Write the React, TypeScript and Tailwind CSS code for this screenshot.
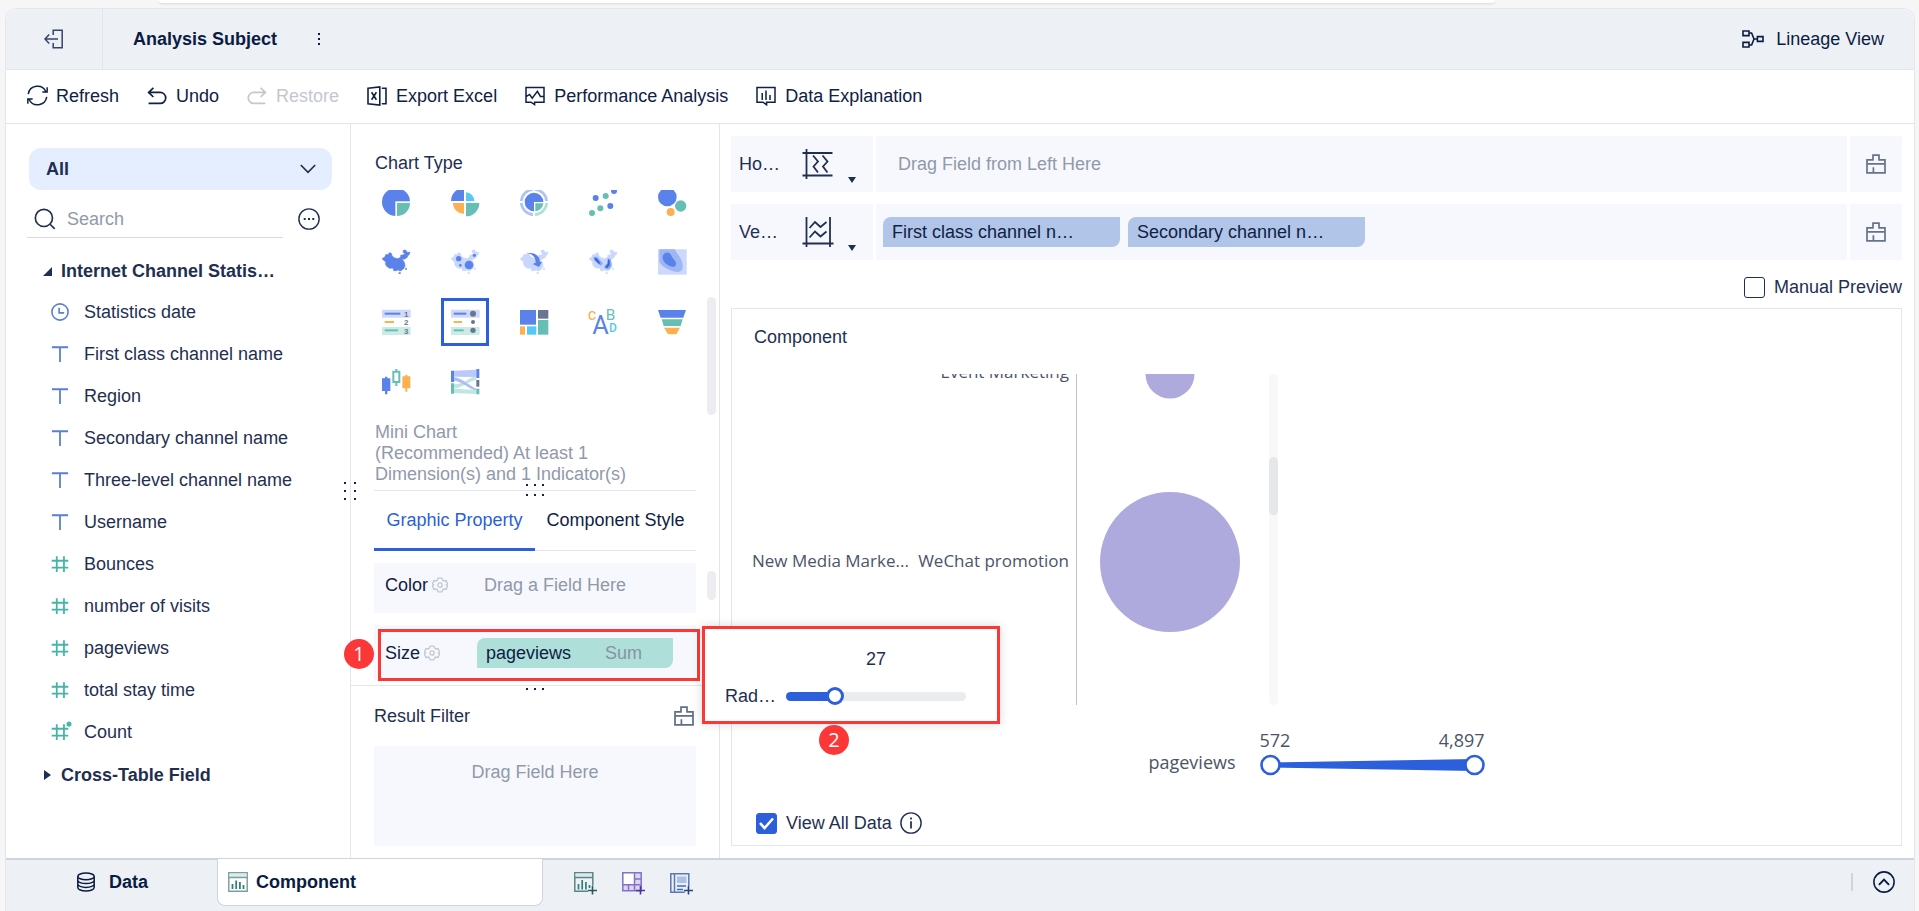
import { ReactNode, useState } from "react";
import clsx from "clsx";

type IconProps = { className?: string };
type FieldType = "date" | "text" | "number" | "count";
type Field = { name: string; type: FieldType };

const fields: Field[] = [
  { name: "Statistics date", type: "date" },
  { name: "First class channel name", type: "text" },
  { name: "Region", type: "text" },
  { name: "Secondary channel name", type: "text" },
  { name: "Three-level channel name", type: "text" },
  { name: "Username", type: "text" },
  { name: "Bounces", type: "number" },
  { name: "number of visits", type: "number" },
  { name: "pageviews", type: "number" },
  { name: "total stay time", type: "number" },
  { name: "Count", type: "count" },
];

const BLUE = "#5a82ea";
const GREEN = "#66beb5";
const ORANGE = "#fcb050";
const CYAN = "#55c8f5";
const GRAY = "#69768f";
const LIGHT = "#c9d7fd";

/* ---------- line icons ---------- */

const Line = ({
  children,
  className = "w-5 h-5",
  width = 1.5,
}: {
  children: ReactNode;
  className?: string;
  width?: number;
}) => (
  <svg
    viewBox="0 0 20 20"
    className={clsx("shrink-0", className)}
    fill="none"
    stroke="currentColor"
    strokeWidth={width}
    aria-hidden="true"
  >
    {children}
  </svg>
);

const ExitIcon = () => (
  <Line>
    <path d="M9.2 6V1.2h9v17.6h-9V14M14 10H1.2M5.2 5.4 1 10l4.2 4.4" />
  </Line>
);

const RefreshIcon = () => (
  <Line className="w-[21px] h-[21px]" width={1.4}>
    <path d="M1.2 8.6A8.9 8.9 0 0 1 18 6.2M18.8 11.4A8.9 8.9 0 0 1 2 13.8M19.2 2.2v4.4h-4.6M.8 17.8v-4.4h4.6" />
  </Line>
);

const UndoIcon = () => (
  <Line width={1.7}>
    <path d="M6.4 1.8 1.6 6.4 6.4 11M1.8 6.4h11.4a5.3 5.3 0 0 1 0 11H1.6" />
  </Line>
);

const RestoreIcon = () => (
  <Line width={1.7}>
    <path d="m13.6 1.8 4.8 4.6-4.8 4.6M18.2 6.4H6.8a5.3 5.3 0 0 0 0 11h11.6" />
  </Line>
);

const ExcelIcon = () => (
  <Line width={1.6}>
    <path d="M1 2.2 12.8 1v18L1 17.8zM14.8 2.2H19v15.6h-4.2" />
    <path d="m4.6 6.2 4.8 7.6M9.4 6.2l-4.8 7.6" />
  </Line>
);

const PerformanceIcon = () => (
  <Line>
    <path d="M1 1.4h18v14.8h-9.4v2.4l-3.6-2.4H1zM1.4 10.4l3.2-2 2.6 3.8 5.2-6.8 3 5h3.4" />
  </Line>
);

const ExplanationIcon = () => (
  <Line>
    <path d="M1 1.4h18v14.8h-8.4v2.6L7 16.2H1zM6.2 7v7M10 4.4V14M14 9v5" />
  </Line>
);

const LineageIcon = () => (
  <svg viewBox="0 0 22 18" className="w-[22px] h-[18px]" fill="none" stroke="currentColor" strokeWidth="1.6" aria-hidden="true">
    <path d="M1 1h6v4.6H1zM1 12.4h6V17H1zM15.4 6.6H21v4.8h-5.6zM7 3h2.6l2.4 6-2.4 6H7M12 9h3.4" />
  </svg>
);

const SearchIcon = () => (
  <Line className="w-[22px] h-[22px]">
    <circle cx="9" cy="9" r="7.8" />
    <path d="m14.6 14.8 4.2 4.2" />
  </Line>
);

const MoreIcon = () => (
  <Line className="w-[22px] h-[22px]" width={1.3}>
    <circle cx="10" cy="10" r="9.2" />
    <path d="M5.2 10h1.8M9.1 10h1.8M13 10h1.8" strokeWidth="1.8" />
  </Line>
);

const ChevronIcon = ({ className }: IconProps) => (
  <svg viewBox="0 0 16 10" className={className} fill="none" stroke="currentColor" strokeWidth="1.7" aria-hidden="true">
    <path d="m.8 1 7.2 7.4L15.2 1" />
  </svg>
);

const BrushIcon = () => (
  <Line width={1.7}>
    <path d="M1 5.8h6V1.2h6v4.6h6v13H1zM1 9.8h18M7.4 13.2v5.4" />
  </Line>
);

const GearIcon = () => (
  <Line className="w-4 h-4 text-[#c4c8d2]" width={1.7}>
    <path d="M7.6 1.4h4.8l1 2.6 1.6.9 2.6-.4 1.9 4.2-1.6 1.3 1.6 1.3-1.9 4.2-2.6-.4-1.6.9-1 2.6H7.6L6.6 16 5 15.1l-2.6.4L.5 11.3 2.1 10 .5 8.7l1.9-4.2 2.6.4L6.6 4z" />
    <circle cx="10" cy="10" r="2.7" />
  </Line>
);

const InfoIcon = () => (
  <Line className="w-[22px] h-[22px]" width={1.3}>
    <circle cx="10" cy="10" r="9.2" />
    <path d="M10 8.4V15M10 5v1.8" strokeWidth="1.6" />
  </Line>
);

const UpCircleIcon = () => (
  <Line className="w-[22px] h-[22px]" width={1.4}>
    <circle cx="10" cy="10" r="9.2" />
    <path d="m5.4 12.6 4.6-4.8 4.6 4.8" strokeWidth="1.8" />
  </Line>
);

const DatabaseIcon = () => (
  <Line>
    <ellipse cx="10" cy="4.4" rx="8.2" ry="3.4" />
    <path d="M1.8 4.4v11.2c0 1.9 3.7 3.4 8.2 3.4s8.2-1.5 8.2-3.4V4.4M1.8 8.2c0 1.9 3.7 3.4 8.2 3.4s8.2-1.5 8.2-3.4M1.8 12c0 1.9 3.7 3.4 8.2 3.4s8.2-1.5 8.2-3.4" />
  </Line>
);

const HorizontalAxisIcon = () => (
  <svg viewBox="0 0 32 32" className="w-8 h-8" fill="none" stroke="currentColor" strokeWidth="1.8" aria-hidden="true">
    <path d="M4.5 1v30M.5 5h30M.5 27.5h30M11 7.5l5 6-4.5 5 4.5 6M20.5 7.5l5 6-4.5 5 4.5 6" />
  </svg>
);

const VerticalAxisIcon = () => (
  <svg viewBox="0 0 32 32" className="w-8 h-8" fill="none" stroke="currentColor" strokeWidth="1.8" aria-hidden="true">
    <path d="M4.5 1v30M28 1v30M.5 27.5h31M7.5 12l5.5-6 5.5 5 6-5M7.5 21.5l5.5-6 5.5 5 6-5" />
  </svg>
);

const FieldIcon = ({ type }: { type: FieldType }) => {
  if (type === "date") {
    return (
      <Line className="w-[18px] h-[18px] text-[#5b80cf]" width={1.8}>
        <circle cx="10" cy="10" r="9" />
        <path d="M9 5.4V11h5.6" />
      </Line>
    );
  }
  if (type === "text") {
    return (
      <Line className="w-[18px] h-[18px] text-[#5b80cf]" width={2}>
        <path d="M1 2.5h18M10 2.5V19" />
      </Line>
    );
  }
  return (
    <Line className="w-[18px] h-[18px] text-[#45b5a8] overflow-visible" width={2}>
      <path d="M6.4 1.5V19M14.4 1.5V19M.8 6.4h18.4M.8 14h18.4" />
      {type === "count" && (
        <path d="M20-1.8v6M17.4-.3l5.2 3M22.6-.3l-5.2 3" strokeWidth="1.9" />
      )}
    </Line>
  );
};

/* ---------- chart type icons ---------- */

const chinaPath =
  "M0 32l8-4 4-9 6 2 4-7 6 2 2 8 8 6 10 2 8-4 0-6 10-2 2-4-5-3 1-6 7-1 4 7 9 0-3 8-4 1-1 6-8 5-8 1 4 4 4 8 1 8-4 8-8 6-5 1-3-4-6 3-8 0-2-8-10 1-9-6-4-8 2-4z";

const China = ({ fill }: { fill: string }) => (
  <>
    <path d={chinaPath} fill={fill} stroke={fill} strokeWidth="2" />
    <path d="M70 59h4v7h-4zM50 73h6v5h-6z" fill={fill} />
  </>
);

const chartTypes: { label: string; art: ReactNode }[] = [
  {
    label: "Pie",
    art: (
      <>
        <circle cx="42" cy="42" r="42" fill={BLUE} />
        <path d="M40 40h46v46H40z" fill="#fff" />
        <path d="M45 45h39a39 39 0 0 1-39 39z" fill={GREEN} />
      </>
    ),
  },
  {
    label: "Rose",
    art: (
      <>
        <path d="M39 39H0A39 39 0 0 1 39 0z" fill={BLUE} />
        <path d="M45 39V13a26 26 0 0 1 25 26z" fill={CYAN} />
        <path d="M39 45v32A32 32 0 0 1 6 45z" fill={ORANGE} />
        <path d="M45 45h40a40 40 0 0 1-40 40z" fill={GREEN} />
      </>
    ),
  },
  {
    label: "Multilayer pie",
    art: (
      <>
        <path d="M39 84A42 42 0 0 1 0 45h8a34 34 0 0 0 31 31zM0 39A42 42 0 0 1 39 0v8A34 34 0 0 0 8 39zM45 0a42 42 0 0 1 39 39h-8A34 34 0 0 0 45 8z" fill="#afc3f7" />
        <path d="M84 45a42 42 0 0 1-39 39v-8a34 34 0 0 0 31-31z" fill="#b2dfda" />
        <path d="M42 42V70A28 28 0 1 1 70 42z" fill={BLUE} />
        <path d="M46 46h24a26 26 0 0 1-24 24z" fill={GREEN} />
      </>
    ),
  },
  {
    label: "Scatter",
    art: (
      <>
        <g fill={BLUE}>
          <circle cx="20" cy="30" r="9" />
          <circle cx="75" cy="9" r="9" />
          <circle cx="64" cy="54" r="9" />
        </g>
        <g fill={GREEN}>
          <circle cx="50" cy="24" r="9" />
          <circle cx="34" cy="61" r="9" />
          <circle cx="9" cy="75" r="9" />
        </g>
      </>
    ),
  },
  {
    label: "Bubble",
    art: (
      <>
        <circle cx="28" cy="27" r="28" fill={BLUE} />
        <circle cx="68" cy="54" r="17" fill={GREEN} />
        <circle cx="38" cy="72" r="12" fill={ORANGE} />
      </>
    ),
  },
  { label: "Area map", art: <China fill={BLUE} /> },
  {
    label: "Point map",
    art: (
      <>
        <China fill={LIGHT} />
        <g fill={BLUE}>
          <circle cx="23" cy="32" r="8" />
          <circle cx="70" cy="22" r="5" />
          <circle cx="28" cy="52" r="4" />
          <circle cx="54" cy="51" r="13" />
        </g>
      </>
    ),
  },
  {
    label: "Flow map",
    art: (
      <>
        <China fill={LIGHT} />
        <path d="M24 16c18-4 35 6 36 26h6L57 57 38 48l9-4c0-15-8-25-23-28z" fill={BLUE} />
      </>
    ),
  },
  {
    label: "Heat map",
    art: (
      <>
        <China fill={LIGHT} />
        <path d="M14 26l10 0 12 14 6 8-8 5-12-10-8-8zM56 30l10 4 2 20-8 10-12-2-2-8 9-8z" fill="#8aa8f3" />
        <path d="M17 30l6 1 11 14-4 3-12-12zM57 34l5 4 0 14-8 8-6-2 8-10z" fill="#3562d8" />
      </>
    ),
  },
  {
    label: "Density map",
    art: (
      <>
        <path d="M0 4h86v76H0z" fill="#cdd9fb" />
        <path d="M4 4h46c6 12 20 26 23 40 3 16 0 28-14 28C40 72 10 58 4 40z" fill="#9db7f4" />
        <path d="M20 16c10-6 18 0 22 10 5 11 14 12 12 24-3 10-18 6-26 0-13-8-20-24-8-34z" fill={BLUE} />
      </>
    ),
  },
  {
    label: "Ranking table",
    art: (
      <>
        <path d="M0 5h86v24H0z" fill="#cfdafb" />
        <path d="M0 57h86v24H0z" fill="#cdebe6" />
        <path d="M8 17h47" stroke={BLUE} strokeWidth="6" />
        <path d="M8 42h28" stroke={ORANGE} strokeWidth="6" />
        <path d="M8 67h40" stroke={GREEN} strokeWidth="6" />
        <g fill={GRAY} fontSize="24" fontWeight="bold">
          <text x="66" y="26">1</text>
          <text x="66" y="51">2</text>
          <text x="66" y="77">3</text>
        </g>
      </>
    ),
  },
  {
    label: "Mini chart",
    art: (
      <>
        <path d="M0 5h86v24H0z" fill="#cfdafb" />
        <path d="M0 57h86v24H0z" fill="#cdebe6" />
        <path d="M8 17h38" stroke={BLUE} strokeWidth="6" />
        <path d="M8 42h25" stroke={ORANGE} strokeWidth="6" />
        <path d="M8 67h30" stroke={GREEN} strokeWidth="6" />
        <g fill={GRAY}>
          <circle cx="66" cy="17" r="9" />
          <circle cx="66" cy="42" r="6" />
          <circle cx="66" cy="67" r="8" />
        </g>
      </>
    ),
  },
  {
    label: "Treemap",
    art: (
      <>
        <path d="M0 6h48v44H0z" fill={BLUE} />
        <path d="M54 6h31v26H54z" fill={GRAY} />
        <path d="M54 36h31v44H54z" fill={GREEN} />
        <path d="M0 55h15v25H0z" fill={ORANGE} />
        <path d="M21 55h28v25H21z" fill={CYAN} />
      </>
    ),
  },
  {
    label: "Word cloud",
    art: (
      <g className="font-['Roboto',sans-serif]">
        <text x="10" y="79" fontSize="76" fill={BLUE}>A</text>
        <text x="-3" y="37" fontSize="38" fontWeight="500" fill={ORANGE}>C</text>
        <text x="50" y="37" fontSize="46" fill={GREEN}>B</text>
        <text x="60" y="71" fontSize="36" fontWeight="500" fill={CYAN}>D</text>
      </g>
    ),
  },
  {
    label: "Funnel",
    art: (
      <>
        <path d="M0 6h84l-8 23H8z" fill={BLUE} />
        <path d="M11 34h63l-6 20H17z" fill={GREEN} />
        <path d="M18 59h48L55 79H30z" fill={ORANGE} />
      </>
    ),
  },
  {
    label: "Candlestick",
    art: (
      <>
        <path d="M0 31h9v-5h7v5h9v38h-9v10H9V69H0z" fill={BLUE} />
        <path d="M34 11h18v31H34zM43 3v8M43 42v12" fill="none" stroke={GREEN} strokeWidth="6" />
        <path d="M61 25h9v-5h6v5h9v36h-9v10h-6V61h-9z" fill={ORANGE} />
      </>
    ),
  },
  {
    label: "Sankey",
    art: (
      <>
        <path d="M8 8 76 5v22L8 26z" fill="#bac9f8" />
        <path d="M8 48c30 4 44-20 68-24v12C54 38 40 58 8 62z" fill="#bfe6e1" />
        <path d="M8 28c26 2 44 24 68 34v6C48 60 34 40 8 38z" fill="#a9bff6" />
        <path d="M8 62l68 4v12L8 75z" fill="#bfe6e1" />
        <path d="M0 8h9v34H0zM76 3h9v27h-9z" fill={BLUE} />
        <path d="M76 36h9v20h-9z" fill={GRAY} />
        <path d="M0 46h9v31H0zM76 62h9v17h-9z" fill={GREEN} />
      </>
    ),
  },
];

/* ---------- bottom bar icons ---------- */

const ComponentTabIcon = () => (
  <svg viewBox="0 0 20 20" className="w-5 h-5" fill="none" stroke="#7f9f9f" strokeWidth="1.5" aria-hidden="true">
    <path d="M.8.8h18.4v18.4H.8z" />
    <path d="M1.5 1.5h17V5h-17z" fill="#d9ebea" stroke="none" />
    <path d="M.8 5.5h18.4" />
    <path d="M4.5 12v5M8.2 8.5V17M11.9 10v7M15.5 13v4" stroke="#2f8077" strokeWidth="1.8" />
  </svg>
);

const AddComponentIcon = () => (
  <svg viewBox="0 0 23 23" className="w-[23px] h-[23px]" fill="none" stroke="#5b8583" strokeWidth="1.5" aria-hidden="true">
    <path d="M14 19.2H.8V.8h18v13" />
    <path d="M1.5 1.5H18v3H1.5z" fill="#d9ebea" stroke="none" />
    <path d="M.8 5.5h18" />
    <path d="M4.5 12v5.5M8.2 8v9.5M11.9 10v7.5M15.5 13v3" stroke="#2f8077" strokeWidth="1.7" />
    <path d="M18.5 14v8.5M14 18.5h9" stroke="#245c5a" strokeWidth="1.6" />
  </svg>
);

const AddDashboardIcon = () => (
  <svg viewBox="0 0 23 23" className="w-[23px] h-[23px]" fill="none" stroke="#8471c8" strokeWidth="1.5" aria-hidden="true">
    <path d="M.8.8h18.4v18H.8z" fill="#dcd5f3" />
    <path d="M.8.8h11.7v12H.8z" fill="#fff" />
    <path d="M6.5 12.8v6M12.5 12.8v6M12.5 7h6.7M12.5 12.8h6.7" />
    <path d="M18.5 14v8.5M14 18.5h9" stroke="#4a34a6" strokeWidth="1.6" />
  </svg>
);

const AddDocumentIcon = () => (
  <svg viewBox="0 0 23 23" className="w-[23px] h-[23px]" fill="none" stroke="#5c77b4" strokeWidth="1.5" aria-hidden="true">
    <path d="M18.8 14V1.8H.8v18.4h14M4.5 1.8v18.4" />
    <path d="M7 4.5h9.5V11H7z" fill="#aac0ea" stroke="none" />
    <path d="M7 14h9M7 17.5h6" stroke="#3e69c4" strokeWidth="1.6" />
    <path d="M18.5 14v8.5M14 18.5h9" stroke="#27457f" strokeWidth="1.6" />
  </svg>
);

/* ---------- shared pieces ---------- */

const ToolButton = ({
  icon,
  label,
  disabled,
}: {
  icon: ReactNode;
  label: string;
  disabled?: boolean;
}) => (
  <button
    type="button"
    disabled={disabled}
    className="flex items-center gap-[9px] disabled:text-[#c3c7cf]"
  >
    <span className="flex w-5 justify-center">{icon}</span>
    {label}
  </button>
);

const Grip = ({ cols, rows, className }: { cols: 2 | 3; rows: number; className: string }) => (
  <div
    className={clsx(
      "absolute z-10 grid",
      cols === 2 ? "grid-cols-2 gap-x-[8px] gap-y-[6px]" : "grid-cols-3 gap-x-[6px] gap-y-[8px]",
      className
    )}
  >
    {Array.from({ length: cols * rows }, (_, i) => (
      <span key={i} className="h-[2px] w-[2px] bg-[#14244a]" />
    ))}
  </div>
);

const Checkbox = ({
  id,
  label,
  defaultChecked,
}: {
  id: string;
  label: string;
  defaultChecked?: boolean;
}) => (
  <div className="flex items-center gap-[9px]">
    <span className="relative flex">
      <input
        id={id}
        type="checkbox"
        defaultChecked={defaultChecked}
        className="peer h-[21px] w-[21px] appearance-none rounded-[3px] border border-[#1f2f52] checked:border-[#2b5fdb] checked:bg-[#2b5fdb]"
      />
      <svg
        viewBox="0 0 21 21"
        className="pointer-events-none absolute inset-0 hidden peer-checked:block"
        fill="none"
        stroke="#fff"
        strokeWidth="2.6"
        aria-hidden="true"
      >
        <path d="m4 10 4.5 5L17 5.5" />
      </svg>
    </span>
    <label htmlFor={id}>{label}</label>
  </div>
);

const Callout = ({ value, className }: { value: number; className: string }) => (
  <span
    className={clsx(
      "absolute flex h-[30px] w-[30px] items-center justify-center rounded-full bg-[#fb3737] font-['Open_Sans',sans-serif] text-xl leading-none text-white",
      className
    )}
  >
    {value}
  </span>
);

/* ---------- panels ---------- */

const Header = () => (
  <header className="flex h-[61px] shrink-0 items-center rounded-t-xl border-b border-[#e3e6ed] bg-[#edf0f5] text-[#0a1c42]">
    <button
      type="button"
      aria-label="Exit"
      className="flex h-full w-[97px] items-center justify-center border-r border-[#e1e4ec] text-[#33466a]"
    >
      <ExitIcon />
    </button>
    <h1 className="ml-[30px] font-bold">Analysis Subject</h1>
    <button type="button" aria-label="More" className="ml-[40px] flex flex-col gap-[3px] px-px">
      <span className="h-[2px] w-[2px] bg-current" />
      <span className="h-[2px] w-[2px] bg-current" />
      <span className="h-[2px] w-[2px] bg-current" />
    </button>
    <a href="#lineage" className="mr-[30px] ml-auto flex items-center gap-3">
      <LineageIcon />
      Lineage View
    </a>
  </header>
);

const Toolbar = () => (
  <div className="flex h-[54px] shrink-0 items-center gap-7 border-b border-[#e3e6ed] px-[21px] pb-[2px] text-[#0f2145]">
    <ToolButton icon={<RefreshIcon />} label="Refresh" />
    <ToolButton icon={<UndoIcon />} label="Undo" />
    <ToolButton icon={<RestoreIcon />} label="Restore" disabled />
    <ToolButton icon={<ExcelIcon />} label="Export Excel" />
    <ToolButton icon={<PerformanceIcon />} label="Performance Analysis" />
    <ToolButton icon={<ExplanationIcon />} label="Data Explanation" />
  </div>
);

const FieldPanel = () => (
  <aside className="w-[345px] shrink-0 border-r border-[#e3e6ed] pt-6">
    <div className="relative mr-[18px] ml-[23px]">
      <select
        aria-label="Table"
        className="h-[42px] w-full appearance-none rounded-xl bg-[#e5eeff] px-[17px] font-bold outline-none"
      >
        <option>All</option>
      </select>
      <ChevronIcon className="pointer-events-none absolute top-4 right-4 h-[10px] w-4" />
    </div>
    <div className="mt-2 mr-[30px] ml-[21px] flex items-center justify-between">
      <div className="flex h-10 w-64 items-center gap-[11px] border-b border-[#d9dbe0] pt-[2px] pl-[7px]">
        <SearchIcon />
        <input
          type="text"
          aria-label="Search"
          placeholder="Search"
          className="min-w-0 flex-1 outline-none placeholder:text-[#9199ab]"
        />
      </div>
      <button type="button" aria-label="More options" className="pt-[2px]">
        <MoreIcon />
      </button>
    </div>
    <div className="mt-[13px] flex h-10 items-center gap-[9px] pr-[72px] pl-[37px]">
      <svg viewBox="0 0 9 9" className="h-[9px] w-[9px] shrink-0" aria-hidden="true">
        <path d="M9 0v9H0z" fill="currentColor" />
      </svg>
      <span className="truncate font-bold">Internet Channel Statistics</span>
    </div>
    <ul>
      {fields.map((field) => (
        <li key={field.name} className="flex h-[42px] items-center gap-[15px] pl-[45px]">
          <FieldIcon type={field.type} />
          {field.name}
        </li>
      ))}
    </ul>
    <div className="mt-[2px] flex h-10 items-center gap-[9px] pl-[37px]">
      <svg viewBox="0 0 9 10" className="h-[10px] w-[9px] shrink-0" aria-hidden="true">
        <path d="M1 0l7 5-7 5z" fill="currentColor" />
      </svg>
      <span className="font-bold">Cross-Table Field</span>
    </div>
  </aside>
);

const RadiusPopup = () => {
  const [radius, setRadius] = useState(27);

  return (
    <div className="absolute top-[1px] left-[328px] z-20 h-[98px] w-[298px] border-[3px] border-[#fb3737] bg-white px-5 shadow-[0_0_10px_rgba(0,0,0,0.15)]">
      <div className="mt-5 ml-[61px] w-[180px] text-center leading-5">{radius}</div>
      <div className="mt-[17px] flex items-center gap-[7px] leading-5">
        <label htmlFor="radius" className="w-[54px] truncate">
          Radius
        </label>
        <div className="relative flex h-5 w-[180px] items-center">
          <div className="h-[9px] w-full overflow-hidden rounded-full bg-[#ebecee]">
            <div className="h-full bg-[#2b5fdb]" style={{ width: `${radius}%` }} />
          </div>
          <input
            id="radius"
            type="range"
            value={radius}
            onChange={(e) => setRadius(Number(e.target.value))}
            className="absolute -left-[9px] h-5 w-[198px] appearance-none bg-transparent [&::-webkit-slider-thumb]:h-[18px] [&::-webkit-slider-thumb]:w-[18px] [&::-webkit-slider-thumb]:appearance-none [&::-webkit-slider-thumb]:rounded-full [&::-webkit-slider-thumb]:border-[3px] [&::-webkit-slider-thumb]:border-[#2b5fdb] [&::-webkit-slider-thumb]:bg-white"
          />
        </div>
      </div>
      <Callout value={2} className="top-[96px] left-[114px]" />
    </div>
  );
};

const ConfigPanel = () => (
  <section className="relative flex w-[369px] shrink-0 flex-col border-r border-[#e3e6ed]">
    <Grip cols={2} rows={3} className="top-1/2 -left-[7px] -translate-y-1/2" />

    <div className="relative">
      <h2 className="pt-7 pb-4 pl-6 leading-[22px]">Chart Type</h2>
      <div className="overflow-hidden">
        <div className="-mt-3 grid w-max grid-cols-5 gap-x-[21px] gap-y-3 pl-[21px]">
          {chartTypes.map(({ label, art }) => (
            <button
              key={label}
              type="button"
              aria-label={label}
              className={clsx(
                "flex h-12 w-12 items-center justify-center border-[3px]",
                label === "Mini chart" ? "border-[#2b5fdb]" : "border-transparent"
              )}
            >
              <svg viewBox="0 0 84 84" className="h-7 w-7 overflow-visible" aria-hidden="true">
                {art}
              </svg>
            </button>
          ))}
        </div>
      </div>
      <p className="px-6 pt-4 pb-[5px] leading-[21px] text-[#9199ab]">
        Mini Chart
        <br />
        (Recommended) At least 1 Dimension(s) and 1 Indicator(s)
      </p>
      <div className="absolute right-[3px] bottom-[75px] h-[118px] w-[9px] rounded-full bg-[#ededf1]" />
    </div>

    <div className="relative mx-[23px] flex h-[61px] border-t border-b border-[#e3e6ed]">
      <Grip cols={3} rows={2} className="-top-[7px] left-1/2 -translate-x-1/2" />
      <button
        type="button"
        className="-mb-px flex-1 border-b-[3px] border-[#2b5fdb] whitespace-nowrap text-[#2b5fdb]"
      >
        Graphic Property
      </button>
      <button type="button" className="-mb-px flex-1 border-b-[3px] border-transparent whitespace-nowrap text-[#0f2145]">
        Component Style
      </button>
    </div>

    <div className="relative flex flex-col gap-3 border-b border-[#e3e6ed] px-[23px] pt-3 pb-1">
      <div className="flex h-[50px] items-center bg-[#f7f8fd] pb-1.5 pl-[11px]">
        <div className="flex w-[99px] items-center gap-1 text-[#0f2145]">
          Color
          <GearIcon />
        </div>
        <span className="text-[#9199ab]">Drag a Field Here</span>
      </div>
      <div className="relative flex h-14 items-center bg-[#f7f8fd] pl-[11px]">
        <div className="flex w-[92px] items-center gap-1 text-[#0f2145]">
          Size
          <GearIcon />
        </div>
        <div className="flex h-[30px] w-[196px] items-center justify-between rounded-tl-lg rounded-br-lg bg-[#aedfd9] pr-[31px] pl-[9px] text-[#0f2145]">
          pageviews
          <span className="text-[#8793a5]">Sum</span>
        </div>
        <div className="absolute top-1 -right-1 bottom-0 left-1 border-[3px] border-[#fb3737]" />
        <Callout value={1} className="top-[14px] -left-[30px]" />
        <RadiusPopup />
      </div>
      <div className="absolute top-5 right-[3px] h-[29px] w-[9px] rounded-full bg-[#ededf1]" />
    </div>

    <div className="relative mx-[23px]">
      <Grip cols={3} rows={1} className="top-[2px] left-1/2 -translate-x-1/2" />
      <div className="flex h-[60px] items-center justify-between pr-[2px]">
        <h2>Result Filter</h2>
        <button type="button" aria-label="Clear filter" className="text-[#5f6d86]">
          <BrushIcon />
        </button>
      </div>
      <div className="h-[100px] bg-[#f7f8fd] pt-4 text-center leading-5 text-[#9199ab]">
        Drag Field Here
      </div>
    </div>
  </section>
);

const AxisRow = ({
  label,
  icon,
  children,
}: {
  label: string;
  icon: ReactNode;
  children: ReactNode;
}) => (
  <div className="flex h-14 gap-[3px]">
    <div className="relative flex w-[142px] items-center bg-[#f7f8fd] pl-2">
      <span className="w-[43px] truncate">{label}</span>
      <button type="button" aria-label={`${label} type`} className="ml-5 flex items-center">
        {icon}
        <svg viewBox="0 0 8 6" className="absolute right-[17px] bottom-[9px] h-[6px] w-2" aria-hidden="true">
          <path d="M0 0h8L4 6z" fill="currentColor" />
        </svg>
      </button>
    </div>
    <div className="flex flex-1 items-center gap-2 bg-[#f7f8fd] pl-[7px]">{children}</div>
    <button
      type="button"
      aria-label={`Clear ${label}`}
      className="flex w-[52px] items-center justify-center bg-[#f7f8fd] text-[#66738b]"
    >
      <BrushIcon />
    </button>
  </div>
);

const FieldPill = ({ name }: { name: string }) => (
  <div className="flex h-[30px] w-[237px] items-center rounded-tl-lg rounded-br-lg bg-[#b0c5e8] pr-[38px] pl-[9px] text-[#0f2145]">
    <span className="truncate">{name}</span>
  </div>
);

const BubbleChart = () => (
  <div className="flex gap-[9px]">
    <svg width="528" height="331" className="font-['Open_Sans',sans-serif] text-[17px]" role="img" aria-label="Pageviews by channel">
      <g fill="#4b5468">
        <text x="337" y="4" textAnchor="end">Event Marketing</text>
        <text x="20" y="193">New Media Marke...</text>
        <text x="337" y="193" textAnchor="end">WeChat promotion</text>
      </g>
      <path d="M344.5 0v331" stroke="#c2c3c7" />
      <g fill="#afaade">
        <circle cx="438" cy="0" r="24.5" />
        <circle cx="438" cy="188" r="70" />
      </g>
    </svg>
    <div className="h-[331px] w-[9px] rounded-full bg-[#f8f8f8] pt-[83px]">
      <div className="h-[58px] rounded-full bg-[#e6e7ea]" />
    </div>
  </div>
);

const SizeLegend = () => (
  <div className="mt-[23px] flex items-end justify-center gap-6 font-['Open_Sans',sans-serif] text-[#4b5468]">
    <span className="pb-1.5 leading-5">pageviews</span>
    <div className="w-[225px]">
      <div className="flex justify-between leading-6">
        <span>572</span>
        <span>4,897</span>
      </div>
      <svg viewBox="0 0 225 26" className="block h-[26px] w-full" aria-hidden="true">
        <path d="M10 10.5 215 7v12L10 15.5z" fill="#2b5fdb" />
        <g fill="#fff" stroke="#2b5fdb" strokeWidth="2.6">
          <circle cx="10.5" cy="13" r="9" />
          <circle cx="214.5" cy="13" r="9" />
        </g>
      </svg>
    </div>
  </div>
);

const Workspace = () => (
  <main className="flex min-w-0 flex-1 flex-col py-3 pr-3 pl-[11px]">
    <div className="flex flex-col gap-3">
      <AxisRow label="Horizontal Axis" icon={<HorizontalAxisIcon />}>
        <span className="pl-[15px] text-[#9199ab]">Drag Field from Left Here</span>
      </AxisRow>
      <AxisRow label="Vertical Axis" icon={<VerticalAxisIcon />}>
        <FieldPill name="First class channel name" />
        <FieldPill name="Secondary channel name" />
      </AxisRow>
    </div>
    <div className="flex h-12 items-center justify-end pt-1.5">
      <Checkbox id="manual-preview" label="Manual Preview" />
    </div>
    <div className="flex flex-1 flex-col border border-[#e3e6ed]">
      <h2 className="pt-[18px] pb-[27px] pl-[22px] leading-5">Component</h2>
      <BubbleChart />
      <SizeLegend />
      <div className="mt-auto flex h-[44px] items-center gap-2 pl-6">
        <Checkbox id="view-all" label="View All Data" defaultChecked />
        <InfoIcon />
      </div>
    </div>
  </main>
);

const BottomBar = () => (
  <footer className="flex h-[53px] shrink-0 border-t-2 border-[#cfd3de] bg-[#edf0f5] font-bold text-[#0a1c42]">
    <button type="button" className="flex h-11 w-[211px] items-center gap-[13px] pl-[70px]">
      <DatabaseIcon />
      Data
    </button>
    <button
      type="button"
      className="-mt-px flex h-[47px] w-[326px] items-center gap-2 rounded-b-lg border border-t-0 border-[#cfd3de] bg-white pl-[10px]"
    >
      <ComponentTabIcon />
      Component
    </button>
    <div className="ml-[31px] flex h-[46px] items-center gap-[25px]">
      <button type="button" aria-label="Add component">
        <AddComponentIcon />
      </button>
      <button type="button" aria-label="Add dashboard">
        <AddDashboardIcon />
      </button>
      <button type="button" aria-label="Add document">
        <AddDocumentIcon />
      </button>
    </div>
    <div className="mr-[19px] ml-auto flex h-11 items-center gap-5">
      <span className="h-[18px] w-[2px] bg-[#d0d4df]" />
      <button type="button" aria-label="Expand">
        <UpCircleIcon />
      </button>
    </div>
  </footer>
);

const App = () => {
  return (
    <div className="flex min-h-screen flex-col bg-[#f6f6f6] font-['Liberation_Sans',Arial,sans-serif] text-lg text-[#1f2f52]">
      <div className="h-2 px-[159px]">
        <div className="mr-[265px] h-[3px] rounded-b-xl bg-white shadow-sm" />
      </div>
      <div className="mr-1 ml-[5px] flex flex-1 flex-col rounded-t-xl border border-b-0 border-[#e3e6ed] bg-white">
        <Header />
        <Toolbar />
        <div className="flex flex-1">
          <FieldPanel />
          <ConfigPanel />
          <Workspace />
        </div>
        <BottomBar />
      </div>
    </div>
  );
};

export default App;
